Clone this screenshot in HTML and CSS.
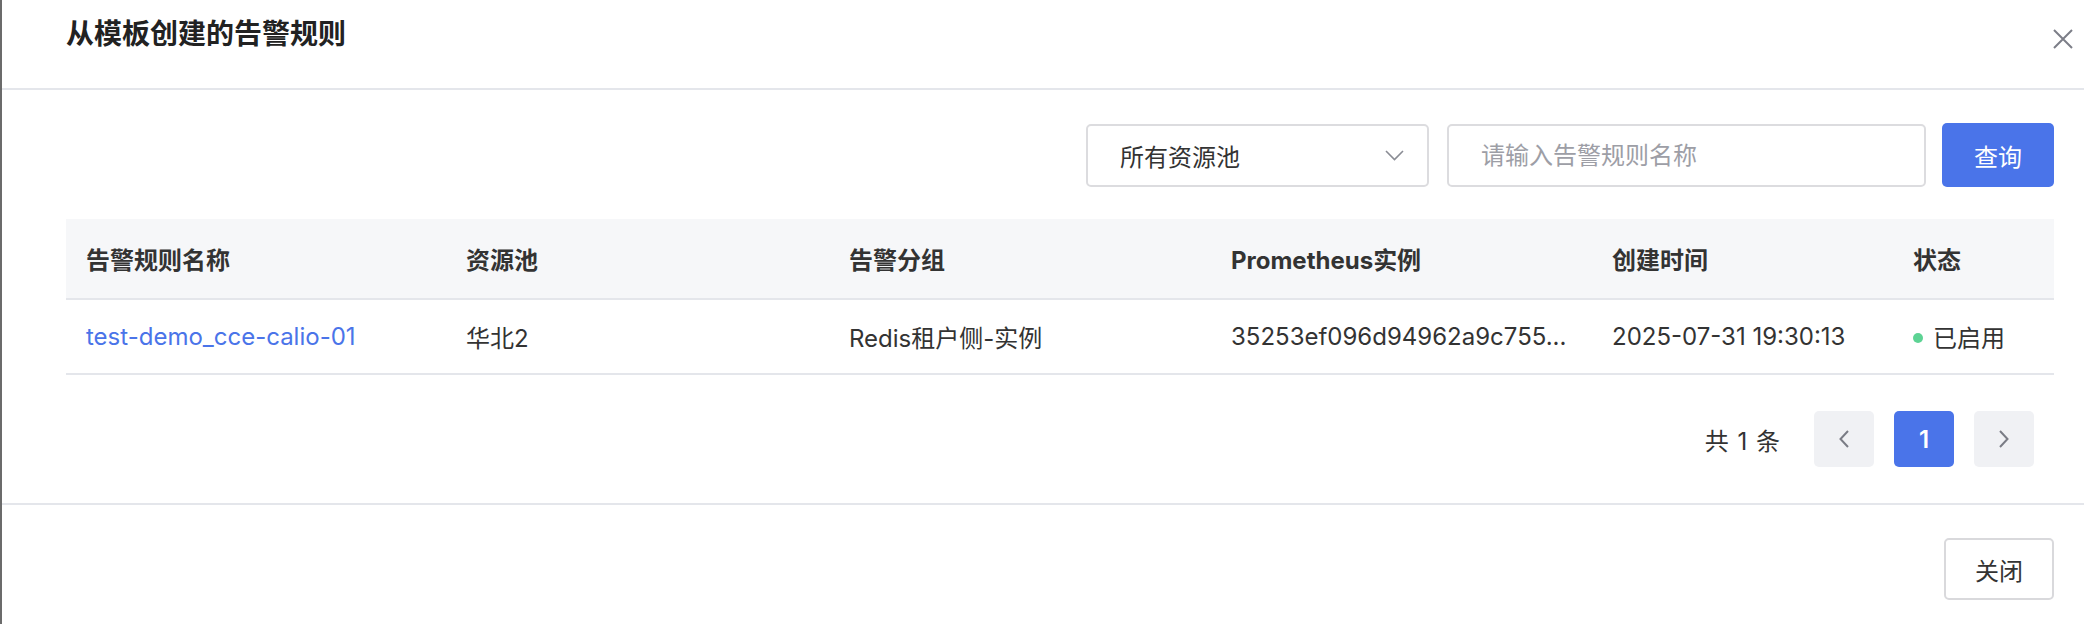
FILE: index.html
```html
<!DOCTYPE html>
<html lang="zh-CN">
<head>
    <meta charset="UTF-8">
    <title>从模板创建的告警规则</title>
    <link rel="stylesheet" href="styles.css">
</head>
<body>
    <div class="dialog">
        <div class="dialog-header">
            <h2 class="dialog-title">从模板创建的告警规则</h2>
            <span class="dialog-close">
                <svg width="20" height="20" viewBox="0 0 20 20"><path d="M1 1L19 19M19 1L1 19" stroke="#7c7e88" stroke-width="2" fill="none"/></svg>
            </span>
        </div>
        <div class="dialog-body">
            <div class="filter">
                <div class="select">
                    <span>所有资源池</span>
                    <svg width="19" height="11" viewBox="0 0 19 11"><path d="M1 1L9.5 9.5L18 1" stroke="#8a8c94" stroke-width="1.6" fill="none"/></svg>
                </div>
                <input class="search" type="text" placeholder="请输入告警规则名称">
                <button class="btn btn-primary">查询</button>
            </div>

            <table class="rule-table">
                <colgroup>
                    <col class="c-name">
                    <col class="c-pool">
                    <col class="c-group">
                    <col class="c-prom">
                    <col class="c-time">
                    <col class="c-state">
                </colgroup>
                <thead>
                    <tr>
                        <th>告警规则名称</th>
                        <th>资源池</th>
                        <th>告警分组</th>
                        <th>Prometheus实例</th>
                        <th>创建时间</th>
                        <th>状态</th>
                    </tr>
                </thead>
                <tbody>
                    <tr>
                        <td><a class="link" href="#">test-demo_cce-calio-01</a></td>
                        <td>华北2</td>
                        <td>Redis租户侧-实例</td>
                        <td>35253ef096d94962a9c755...</td>
                        <td>2025-07-31 19:30:13</td>
                        <td><span class="dot"></span>已启用</td>
                    </tr>
                </tbody>
            </table>

            <div class="pager">
                <span class="total">共 1 条</span>
                <span class="page-btn">
                    <svg width="10" height="18" viewBox="0 0 10 18"><path d="M9 1L1.5 9L9 17" stroke="#7a7c85" stroke-width="2" fill="none"/></svg>
                </span>
                <span class="page-btn current">1</span>
                <span class="page-btn">
                    <svg width="10" height="18" viewBox="0 0 10 18"><path d="M1 1L8.5 9L1 17" stroke="#7a7c85" stroke-width="2" fill="none"/></svg>
                </span>
            </div>
        </div>
        <div class="dialog-footer">
            <button class="btn">关闭</button>
        </div>
    </div>
</body>
</html>
```

FILE: styles.css
```css
*{
    padding: 0;
    margin: 0;
    box-sizing: border-box;
}
body{
    width: 2084px;
    height: 624px;
    overflow: hidden;
    background-color: #fff;
    font-family: Inter, "Noto Sans CJK SC", sans-serif;
    font-size: 24px;
    color: #333;
}
.dialog{
    height: 624px;
    border-left: 2px solid #6b6b6b;
    background-color: #fff;
}
.dialog-header{
    height: 90px;
    display: flex;
    justify-content: space-between;
    align-items: flex-start;
    padding: 14px 11px 0 64px;
    border-bottom: 2px solid #e4e6eb;
}
.dialog-title{
    font-size: 28px;
    line-height: 40px;
    font-weight: 700;
    color: #222;
}
.dialog-close{
    display: block;
    width: 20px;
    height: 20px;
    margin-top: 12px;
    cursor: pointer;
}
.dialog-body{
    padding: 33px 30px 0 64px;
}
.filter{
    display: flex;
    justify-content: flex-end;
    align-items: center;
    height: 64px;
}
.select{
    width: 343px;
    height: 63px;
    display: flex;
    justify-content: space-between;
    align-items: center;
    padding: 0 23px 0 32px;
    border: 2px solid #dcdcdf;
    border-radius: 5px;
    color: #333;
}
.search{
    width: 479px;
    height: 63px;
    margin-left: 18px;
    padding: 0 32px;
    border: 2px solid #dcdcdf;
    border-radius: 5px;
    font-family: inherit;
    font-size: 24px;
    color: #333;
    outline: none;
}
.search::placeholder{
    color: #9d9ea6;
}
.btn{
    width: 110px;
    height: 62px;
    border: 2px solid #d9d9dc;
    border-radius: 5px;
    background-color: #fff;
    font-family: inherit;
    font-size: 24px;
    color: #333;
    cursor: pointer;
}
.btn-primary{
    width: 112px;
    height: 64px;
    margin-left: 16px;
    border: none;
    background-color: #4a74e9;
    color: #fff;
}
.rule-table{
    width: 100%;
    margin-top: 32px;
    border-collapse: collapse;
    table-layout: fixed;
}
.c-name{ width: 380px; }
.c-pool{ width: 383px; }
.c-group{ width: 382px; }
.c-prom{ width: 381px; }
.c-time{ width: 301px; }
.c-state{ width: 161px; }
.rule-table th{
    height: 80px;
    padding: 0 20px;
    background-color: #f6f7f9;
    border-bottom: 2px solid #e4e6eb;
    text-align: left;
    font-weight: 700;
    color: #333;
    white-space: nowrap;
}
.rule-table td{
    height: 75px;
    padding: 0 20px;
    border-bottom: 2px solid #e4e6eb;
    white-space: nowrap;
    color: #333;
}
.link{
    color: #4a74e9;
    text-decoration: none;
}
.dot{
    display: inline-block;
    width: 10px;
    height: 10px;
    margin-right: 10px;
    border-radius: 50%;
    background-color: #5dd394;
    vertical-align: middle;
    position: relative;
    top: -2px;
}
.pager{
    display: flex;
    justify-content: flex-end;
    align-items: center;
    margin-top: 36px;
    margin-right: 20px;
    gap: 20px;
}
.pager .total{
    margin-right: 14px;
    color: #333;
    word-spacing: 2px;
}
.page-btn{
    width: 60px;
    height: 56px;
    display: flex;
    justify-content: center;
    align-items: center;
    border-radius: 5px;
    background-color: #f0f1f4;
    cursor: pointer;
}
.page-btn.current{
    background-color: #4a74e9;
    color: #fff;
    font-weight: 600;
}
.dialog-footer{
    margin-top: 36px;
    border-top: 2px solid #e4e6eb;
    display: flex;
    justify-content: flex-end;
    padding: 33px 30px 0 0;
}
```
